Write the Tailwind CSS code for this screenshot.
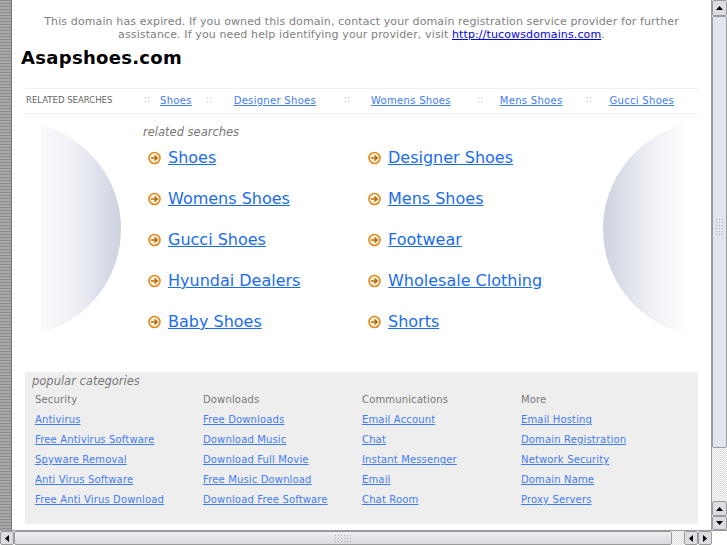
<!DOCTYPE html>
<html><head><meta charset="utf-8"><script src="https://cdn.jsdelivr.net/npm/@tailwindcss/browser@4"></script></head>
<body class="bg-white">
<div class="w-[727px] h-[545px] flex flex-col overflow-hidden font-['DejaVu_Sans',sans-serif]">
  <div class="flex h-[530px]">
    <div class="w-[12px] shrink-0 bg-[repeating-linear-gradient(180deg,#8c8c8c_0,#8c8c8c_1px,#a8a8a8_1px,#a8a8a8_3px)] border-r border-[#777]"></div>
    <main class="relative w-[699px] shrink-0 overflow-hidden">
      <p class="pt-[15px] pl-[26px] pr-[26px] text-center text-[11px] tracking-[.12px] leading-[13px] text-[#808080]">This domain has expired. If you owned this domain, contact your domain registration service provider for further assistance. If you need help identifying your provider, visit <a class="text-[#0000ee] underline">http://tucowsdomains.com</a>.</p>
      <h1 class="mt-[4px] ml-[9px] text-[18px] tracking-[.3px] leading-[26px] font-bold text-black">Asapshoes.com</h1>
      <div class="mt-[17px] ml-[13px] w-[673px] h-[26px] pb-[2px] border-y border-[#f0f0f4] flex items-center text-[10px] tracking-[.3px] text-[#3f7cf5] relative">
        <span class="w-[119px] pl-px text-[8.5px] tracking-normal text-[#666]">RELATED SEARCHES</span>
        <span class="w-[16px] text-[9px] text-[#bbb]">::</span><a class="underline">Shoes</a>
        <span class="ml-[14px] w-[28px] text-[9px] text-[#bbb]">::</span><a class="underline">Designer Shoes</a>
        <span class="ml-[28px] w-[27px] text-[9px] text-[#bbb]">::</span><a class="underline">Womens Shoes</a>
        <span class="ml-[26px] w-[23px] text-[9px] text-[#bbb]">::</span><a class="underline">Mens Shoes</a>
        <span class="ml-[23px] w-[24px] text-[9px] text-[#bbb]">::</span><a class="underline">Gucci Shoes</a>
      </div>

      <svg class="absolute left-[29px] top-[124px]" width="81" height="210" viewBox="0 0 81 210">
        <defs><linearGradient id="g1" x1="0" x2="1" y1="0" y2="0"><stop offset="0" stop-color="#fbfafd"/><stop offset="0.4" stop-color="#f0f1f6"/><stop offset="1" stop-color="#cdd2df"/></linearGradient></defs>
        <path d="M0 1 A107.6 107.6 0 0 1 0 209 Z" fill="url(#g1)"/>
      </svg>
      <svg class="absolute left-[590px] top-[124px]" width="81" height="210" viewBox="0 0 81 210">
        <defs><linearGradient id="g2" x1="1" x2="0" y1="0" y2="0"><stop offset="0" stop-color="#fbfafd"/><stop offset="0.4" stop-color="#f0f1f6"/><stop offset="1" stop-color="#cdd2df"/></linearGradient></defs>
        <path d="M81 1 A107.6 107.6 0 0 0 81 209 Z" fill="url(#g2)"/>
      </svg>

      <div class="relative pl-[131px] pt-[10px]">
        <p class="text-[11.5px] leading-[16px] italic text-[#777]">related searches</p>
        <div class="mt-[7px] ml-[5px] grid grid-cols-[220px_220px] auto-rows-[41px] text-[16px] leading-[21px] text-[#1a6cf0]">
          <a class="flex gap-[7px] items-start"><svg class="mt-[4px]" width="13" height="14" viewBox="0 0 13 13"><circle cx="6.5" cy="6.5" r="5.5" fill="#fdf3e0" stroke="#e08a1c" stroke-width="1.6"/><path d="M3 6.5h6M6.5 4l2.7 2.5L6.5 9" fill="none" stroke="#b9690c" stroke-width="1.6"/></svg><span class="underline">Shoes</span></a>
          <a class="flex gap-[7px] items-start"><svg class="mt-[4px]" width="13" height="14" viewBox="0 0 13 13"><circle cx="6.5" cy="6.5" r="5.5" fill="#fdf3e0" stroke="#e08a1c" stroke-width="1.6"/><path d="M3 6.5h6M6.5 4l2.7 2.5L6.5 9" fill="none" stroke="#b9690c" stroke-width="1.6"/></svg><span class="underline">Designer Shoes</span></a>
          <a class="flex gap-[7px] items-start"><svg class="mt-[4px]" width="13" height="14" viewBox="0 0 13 13"><circle cx="6.5" cy="6.5" r="5.5" fill="#fdf3e0" stroke="#e08a1c" stroke-width="1.6"/><path d="M3 6.5h6M6.5 4l2.7 2.5L6.5 9" fill="none" stroke="#b9690c" stroke-width="1.6"/></svg><span class="underline">Womens Shoes</span></a>
          <a class="flex gap-[7px] items-start"><svg class="mt-[4px]" width="13" height="14" viewBox="0 0 13 13"><circle cx="6.5" cy="6.5" r="5.5" fill="#fdf3e0" stroke="#e08a1c" stroke-width="1.6"/><path d="M3 6.5h6M6.5 4l2.7 2.5L6.5 9" fill="none" stroke="#b9690c" stroke-width="1.6"/></svg><span class="underline">Mens Shoes</span></a>
          <a class="flex gap-[7px] items-start"><svg class="mt-[4px]" width="13" height="14" viewBox="0 0 13 13"><circle cx="6.5" cy="6.5" r="5.5" fill="#fdf3e0" stroke="#e08a1c" stroke-width="1.6"/><path d="M3 6.5h6M6.5 4l2.7 2.5L6.5 9" fill="none" stroke="#b9690c" stroke-width="1.6"/></svg><span class="underline">Gucci Shoes</span></a>
          <a class="flex gap-[7px] items-start"><svg class="mt-[4px]" width="13" height="14" viewBox="0 0 13 13"><circle cx="6.5" cy="6.5" r="5.5" fill="#fdf3e0" stroke="#e08a1c" stroke-width="1.6"/><path d="M3 6.5h6M6.5 4l2.7 2.5L6.5 9" fill="none" stroke="#b9690c" stroke-width="1.6"/></svg><span class="underline">Footwear</span></a>
          <a class="flex gap-[7px] items-start"><svg class="mt-[4px]" width="13" height="14" viewBox="0 0 13 13"><circle cx="6.5" cy="6.5" r="5.5" fill="#fdf3e0" stroke="#e08a1c" stroke-width="1.6"/><path d="M3 6.5h6M6.5 4l2.7 2.5L6.5 9" fill="none" stroke="#b9690c" stroke-width="1.6"/></svg><span class="underline">Hyundai Dealers</span></a>
          <a class="flex gap-[7px] items-start"><svg class="mt-[4px]" width="13" height="14" viewBox="0 0 13 13"><circle cx="6.5" cy="6.5" r="5.5" fill="#fdf3e0" stroke="#e08a1c" stroke-width="1.6"/><path d="M3 6.5h6M6.5 4l2.7 2.5L6.5 9" fill="none" stroke="#b9690c" stroke-width="1.6"/></svg><span class="underline">Wholesale Clothing</span></a>
          <a class="flex gap-[7px] items-start"><svg class="mt-[4px]" width="13" height="14" viewBox="0 0 13 13"><circle cx="6.5" cy="6.5" r="5.5" fill="#fdf3e0" stroke="#e08a1c" stroke-width="1.6"/><path d="M3 6.5h6M6.5 4l2.7 2.5L6.5 9" fill="none" stroke="#b9690c" stroke-width="1.6"/></svg><span class="underline">Baby Shoes</span></a>
          <a class="flex gap-[7px] items-start"><svg class="mt-[4px]" width="13" height="14" viewBox="0 0 13 13"><circle cx="6.5" cy="6.5" r="5.5" fill="#fdf3e0" stroke="#e08a1c" stroke-width="1.6"/><path d="M3 6.5h6M6.5 4l2.7 2.5L6.5 9" fill="none" stroke="#b9690c" stroke-width="1.6"/></svg><span class="underline">Shorts</span></a>
        </div>
      </div>

      <section class="absolute left-[13px] top-[372px] w-[673px] h-[152px] rounded-[2px] bg-[#eeeeee] pl-[7px] pt-[1px]">
        <p class="text-[11.5px] leading-[16px] italic text-[#777]">popular categories</p>
        <div class="ml-[3px] mt-[1px] grid grid-cols-[168px_159px_159px_159px] text-[10px] tracking-[.15px]">
          <ul class="grid auto-rows-[20px] leading-[20px] text-[#3f7cf5]"><li class="text-[#777]">Security</li><li><a class="underline">Antivirus</a></li><li><a class="underline">Free Antivirus Software</a></li><li><a class="underline">Spyware Removal</a></li><li><a class="underline">Anti Virus Software</a></li><li><a class="underline">Free Anti Virus Download</a></li></ul>
          <ul class="grid auto-rows-[20px] leading-[20px] text-[#3f7cf5]"><li class="text-[#777]">Downloads</li><li><a class="underline">Free Downloads</a></li><li><a class="underline">Download Music</a></li><li><a class="underline">Download Full Movie</a></li><li><a class="underline">Free Music Download</a></li><li><a class="underline">Download Free Software</a></li></ul>
          <ul class="grid auto-rows-[20px] leading-[20px] text-[#3f7cf5]"><li class="text-[#777]">Communications</li><li><a class="underline">Email Account</a></li><li><a class="underline">Chat</a></li><li><a class="underline">Instant Messenger</a></li><li><a class="underline">Email</a></li><li><a class="underline">Chat Room</a></li></ul>
          <ul class="grid auto-rows-[20px] leading-[20px] text-[#3f7cf5]"><li class="text-[#777]">More</li><li><a class="underline">Email Hosting</a></li><li><a class="underline">Domain Registration</a></li><li><a class="underline">Network Security</a></li><li><a class="underline">Domain Name</a></li><li><a class="underline">Proxy Servers</a></li></ul>
        </div>
      </section>
    </main>

    <div class="w-[16px] shrink-0 flex flex-col bg-[#f1f1f3] border-l border-[#9a9a9a]">
      <div class="h-[16px] shrink-0 flex items-center justify-center bg-[#dcdde2] border border-[#9a9a9a] rounded-[2px]"><svg width="7" height="4"><path d="M3.5 0L7 4H0Z" fill="#000"/></svg></div>
      <div class="h-[432px] shrink-0 flex flex-col items-center justify-center bg-[#e3e5ee] border border-[#9a9a9a] rounded-[2px] pb-[10px]">
        <div class="w-[9px] h-[18px] bg-[radial-gradient(#a9abb3_1px,transparent_1px)] bg-[length:3px_3px]"></div>
      </div>
      <div class="flex-1 bg-[repeating-conic-gradient(#dedede_0_25%,#fafafa_0_50%)] bg-[length:2px_2px]"></div>
      <div class="h-[15px] shrink-0 flex items-center justify-center bg-[#dcdde2] border border-[#9a9a9a] rounded-[2px]"><svg width="7" height="4"><path d="M3.5 0L7 4H0Z" fill="#000"/></svg></div>
      <div class="h-[14px] shrink-0 flex items-center justify-center bg-[#dcdde2] border border-[#9a9a9a] rounded-[2px]"><svg width="7" height="4"><path d="M0 0H7L3.5 4Z" fill="#000"/></svg></div>
    </div>
  </div>

  <div class="h-[15px] flex bg-white border-t border-[#9a9a9a]">
    <div class="w-[14px] shrink-0 flex items-center justify-center bg-[#dcdde2] border border-[#9a9a9a] rounded-[2px]"><svg width="4" height="7"><path d="M4 0V7L0 3.5Z" fill="#000"/></svg></div>
    <div class="w-[658px] shrink-0 flex items-center justify-center bg-[linear-gradient(#eceef3,#d8dae2)] border border-[#9a9a9a] rounded-[2px]">
      <div class="w-[18px] h-[9px] bg-[radial-gradient(#a9abb3_1px,transparent_1px)] bg-[length:3px_3px]"></div>
    </div>
    <div class="w-[12px] shrink-0 bg-[repeating-conic-gradient(#dedede_0_25%,#fafafa_0_50%)] bg-[length:2px_2px]"></div>
    <div class="w-[14px] shrink-0 flex items-center justify-center bg-[#dcdde2] border border-[#9a9a9a] rounded-[2px]"><svg width="4" height="7"><path d="M4 0V7L0 3.5Z" fill="#000"/></svg></div>
    <div class="w-[14px] shrink-0 flex items-center justify-center bg-[#dcdde2] border border-[#9a9a9a] rounded-[2px]"><svg width="4" height="7"><path d="M0 0L4 3.5L0 7Z" fill="#000"/></svg></div>
    <div class="flex-1 bg-white"></div>
  </div>
</div>
</body></html>
